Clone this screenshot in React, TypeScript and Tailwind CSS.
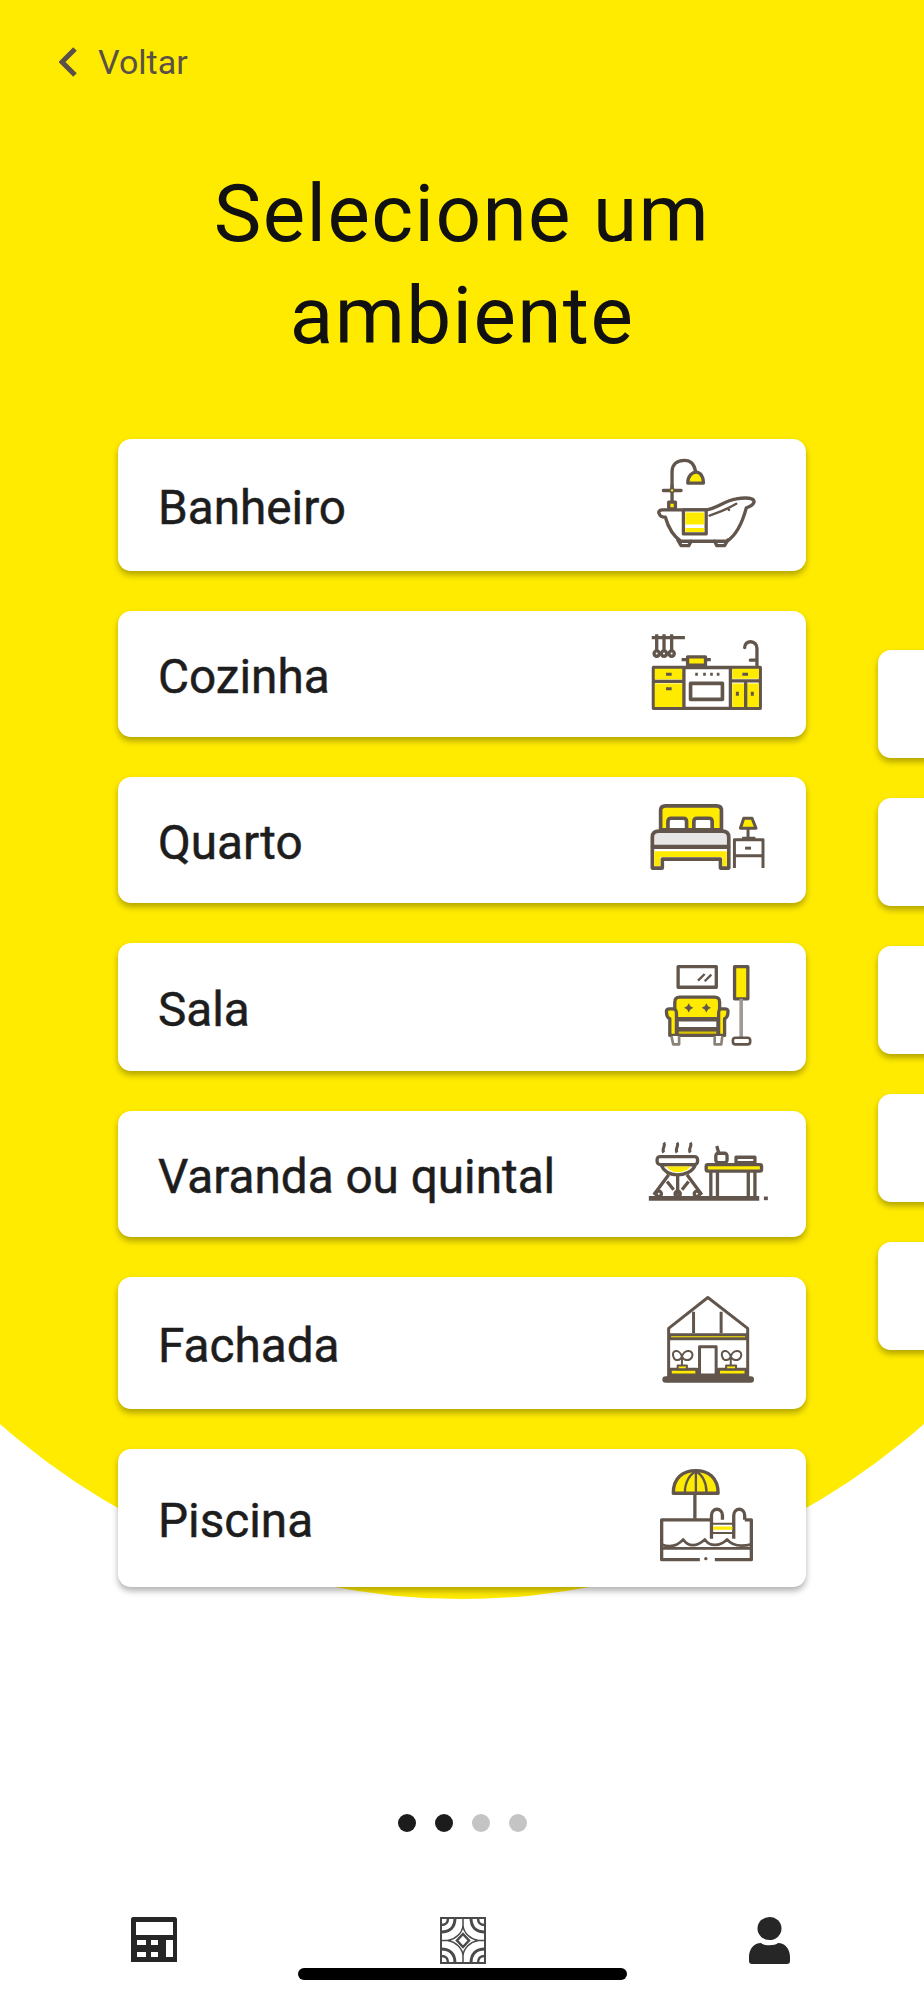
import React from "react";

const ink = "#62564c";
const yellow = "#ffeb00";

// icon outlines, soft like the scaled bitmaps in the app
const iconClass = "blur-[0.5px]";

const Bathtub = () => (
  <svg className={iconClass} width="102" height="92" viewBox="50 20 305 275" fill="none" stroke={ink} strokeWidth="10" strokeLinecap="round" strokeLinejoin="round">
    <path d="M98 115V65C98 40 115 30 135 30C155 30 165 45 168 62" />
    <path d="M145 98C145 75 160 65 170 65C182 65 192 78 192 98Z" fill={yellow} />
    <path d="M72 120H125M98 105V155" />
    <path d="M98 112L106 120L98 128L90 120Z" fill={yellow} strokeWidth="5" />
    <path d="M88 155H108V175H88Z" fill={yellow} />
    <path d="M60 190C55 182 62 178 70 178H200C230 175 255 150 290 145C320 140 345 142 343 155C340 165 330 168 320 172C310 210 295 250 262 272H125C100 255 85 225 78 200C70 200 62 197 60 190Z" fill="#fff" />
    <path d="M210 195C240 185 265 175 290 160" strokeWidth="7" />
    <path d="M132 178H200V250H132Z" fill="#fff" />
    <path d="M138 186H194V222H138ZM138 232H194V244H138Z" fill={yellow} stroke="none" />
    <path d="M115 268L125 285H148L155 272M225 272L232 285H255L265 268" />
    <circle cx="268" cy="178" r="4" fill={ink} stroke="none" />
  </svg>
);

const Kitchen = () => (
  <svg className={iconClass} width="113" height="79" viewBox="30 545 340 238" fill="none" stroke={ink} strokeWidth="10" strokeLinejoin="round">
    <path d="M35 562H135M50 552V602M72 552V602M95 552V602" />
    <circle cx="50" cy="610" r="8" />
    <circle cx="72" cy="610" r="8" />
    <circle cx="95" cy="610" r="8" />
    <path d="M143 620H197V645H143Z" fill={yellow} />
    <path d="M125 628H143M197 628H213" />
    <path d="M315 592C315 568 352 568 352 595V645M332 630H352" strokeLinecap="round" />
    <path d="M40 652H362V775H40Z" fill="#fff" />
    <path d="M44 656H130V688H44ZM44 700H130V771H44Z" fill={yellow} stroke="none" />
    <path d="M278 656H358V686H278ZM278 700H314V771H278ZM322 700H358V771H322Z" fill={yellow} stroke="none" />
    <path d="M40 694H132M275 692H362" />
    <path d="M132 652V775M272 652V775M318 696V775" />
    <path d="M152 700H248V748H152Z" fill="#fff" strokeWidth="11" />
    <path d="M166 672H174M190 672H198M211 672H219M231 672H239M78 672H95M78 716H95M308 672H325M293 725V737M338 725V737" strokeWidth="9" />
  </svg>
);

const Bed = () => (
  <svg className={iconClass} width="115" height="68" viewBox="28 100 346 203" fill="none" stroke={ink} strokeWidth="11" strokeLinejoin="round">
    <path d="M60 180V122Q60 108 75 108H228Q243 108 243 122V180Z" fill={yellow} />
    <path d="M82 180V155Q82 145 92 145H128Q138 145 138 155V180ZM160 180V155Q160 145 170 145H205Q215 145 215 155V180Z" fill="#fff" />
    <path d="M35 230V202Q35 184 55 184H245Q265 184 265 202V230Z" fill="#e6e6e6" />
    <path d="M35 232H265V295H240V268H65V295H35Z" fill="#fff" />
    <path d="M41 244H259V289H246V262H59V289H41Z" fill={yellow} stroke="none" />
    <path d="M282 295V210H368V295M282 258H368" strokeWidth="9" />
    <path d="M310 145H335L347 175H300Z" fill={yellow} strokeWidth="9" />
    <path d="M323 175V205M305 205H345" strokeWidth="9" />
    <path d="M314 235H332" strokeWidth="9" />
  </svg>
);

const Sofa = () => (
  <svg className={iconClass} width="90" height="83" viewBox="70 580 270 250" fill="none" stroke={ink} strokeWidth="10" strokeLinejoin="round">
    <path d="M115 588H230V650H115Z" />
    <path d="M175 630L195 610M195 632L215 612" strokeWidth="7" />
    <path d="M285 588H325V685H285Z" fill={yellow} />
    <path d="M305 685V800" stroke="#a09a94" strokeWidth="11" />
    <rect x="280" y="802" width="52" height="20" rx="8" fill="#fff" strokeWidth="8" />
    <path d="M105 745V695Q105 680 120 680H225Q240 680 240 695V745Z" fill={yellow} />
    <path d="M147 698L152 707L161 712L152 717L147 726L142 717L133 712L142 707ZM200 698L205 707L214 712L205 717L200 726L195 717L186 712L195 707Z" fill={ink} stroke="none" />
    <path d="M80 725Q78 715 90 715H100Q110 715 110 730V795H90V745Q80 740 80 725ZM265 725Q267 715 255 715H245Q237 715 237 730V795H255V745Q265 740 265 725Z" fill={yellow} />
    <path d="M112 748H235V775H112Z" fill="#fff" />
    <path d="M112 778H235V795H112Z" fill="#d9c300" />
    <path d="M95 797L100 822H118V797M225 797V822H245L248 797" fill="#fff" stroke="#8a8178" strokeWidth="8" />
  </svg>
);

const Grill = () => (
  <svg className={iconClass} width="123" height="62" viewBox="20 120 370 187" fill="none" stroke={ink} strokeWidth="10" strokeLinejoin="round">
    <path d="M70 128C78 138 62 145 70 158M110 128C118 138 102 145 110 158M150 128C158 138 142 145 150 158" strokeWidth="9" />
    <rect x="50" y="170" width="122" height="24" rx="9" fill="#fff" />
    <path d="M62 195H165C158 215 135 225 112 225C90 225 70 215 62 195Z" fill="#fff" />
    <path d="M78 200H150C145 210 130 217 112 217C96 217 84 210 78 200Z" fill={yellow} stroke="none" />
    <path d="M85 225L40 285M140 225L185 285M112 225V285M80 245L100 270M145 245L125 270" />
    <circle cx="55" cy="282" r="8" />
    <circle cx="112" cy="282" r="8" />
    <circle cx="170" cy="282" r="8" />
    <path d="M25 296H358" strokeWidth="14" />
    <path d="M372 296H384" strokeWidth="11" />
    <rect x="198" y="194" width="167" height="20" rx="5" fill={yellow} />
    <path d="M212 215V290M232 215V290M325 215V290M345 215V290" />
    <rect x="227" y="160" width="34" height="28" rx="8" fill="#fff" />
    <path d="M236 160L230 138M288 188V172H345V188Z" />
  </svg>
);

const House = () => (
  <svg className={iconClass} width="93" height="90" viewBox="65 585 280 270" fill="none" stroke={ink} strokeWidth="9" strokeLinejoin="round">
    <path d="M85 830V685L203 592L323 685V830Z" fill="#fff" />
    <path d="M160 635V700M243 635V700" />
    <path d="M88 704H320V716H88Z" fill={yellow} />
    <path d="M178 740H228V825H178Z" fill="#fff" />
    <path d="M90 808H170V825H90ZM235 808H318V825H235Z" fill={yellow} />
    <path d="M112 797H140V808H112ZM258 797H288V808H258Z" fill={yellow} strokeWidth="6" />
    <path d="M125 795V770C118 745 90 750 100 772C105 785 120 782 125 770C132 745 165 750 155 772C148 785 130 782 125 770M272 795V770C265 745 237 750 247 772C252 785 267 782 272 770C279 745 312 750 302 772C295 785 277 782 272 770" strokeWidth="6" />
    <path d="M76 839H332" strokeWidth="20" strokeLinecap="round" />
  </svg>
);

const Pool = () => (
  <svg className={iconClass} width="97" height="95" viewBox="55 82 290 286" fill="none" stroke={ink} strokeWidth="10" strokeLinejoin="round">
    <path d="M100 158C100 110 130 90 168 90C205 90 235 110 235 158Z" fill={yellow} />
    <path d="M135 155C135 125 150 100 168 92C186 100 200 125 200 155M168 92V155" strokeWidth="7" />
    <path d="M165 158V235" />
    <path d="M215 238H65V358H180M225 358H335V238H315" />
    <path d="M65 312C85 320 110 320 130 297C145 320 170 320 195 297C210 320 240 318 262 297C280 320 310 318 335 312M68 324H332" strokeWidth="8" />
    <path d="M215 295V225C215 200 248 200 248 225V238M282 295V225C282 200 315 200 315 225V238" fill="#fff" />
    <path d="M220 258H278V268H220Z" fill={yellow} stroke="none" />
    <path d="M218 250H280M218 278H280" strokeWidth="6" />
    <circle cx="198" cy="355" r="5" fill={ink} stroke="none" />
  </svg>
);

const rooms = [
  { name: "Banheiro", icon: Bathtub, card: "h-[132px] pr-[48px]", nudge: "mb-[4px]" },
  { name: "Cozinha", icon: Kitchen, card: "h-[126px] pr-[43px]", nudge: "mb-[5px]" },
  { name: "Quarto", icon: Bed, card: "h-[126px] pr-[41px]", nudge: "mb-[6px]" },
  { name: "Sala", icon: Sofa, card: "h-[128px] pr-[53px]", nudge: "mb-[4px]" },
  { name: "Varanda ou quintal", icon: Grill, card: "h-[126px] pr-[36px]", nudge: "mb-[6px]" },
  { name: "Fachada", icon: House, card: "h-[132px] pr-[51px]", nudge: "mb-[6px]" },
  { name: "Piscina", icon: Pool, card: "h-[138px] pr-[51px]", nudge: "mb-[6px]" },
];

const Calculator = () => (
  <svg width="46" height="45" viewBox="0 0 46 45" fill="#262626">
    <path fillRule="evenodd" d="M0 2C0 1 1 0 2 0H44C45 0 46 1 46 2V45H0ZM5 5V18H42V5ZM6 23V28H15V23ZM20 23V28H27V23ZM35 23V40H42V23ZM6 35V40H15V35ZM20 35V40H27V35Z" />
  </svg>
);

const Tile = () => (
  <svg className="blur-[0.4px]" width="46" height="47" viewBox="0 0 46 47" fill="none" stroke="#4a4a4a">
    <rect x="1" y="1" width="44" height="45" fill="#fff" strokeWidth="2" />
    <path d="M23 1V46M1 23.5H45" strokeWidth="1.5" />
    <path d="M1 15C10 15 15 10 15 1M31 1C31 10 36 15 45 15M1 32C10 32 15 37 15 46M31 46C31 37 36 32 45 32" strokeWidth="3" />
    <path d="M1 8C6 8 8 6 8 1M38 1C38 6 40 8 45 8M1 39C6 39 8 41 8 46M38 46C38 41 40 39 45 39" strokeWidth="2.5" />
    <path d="M23 9C24 16 30 22 38 23.5C30 25 24 31 23 38C22 31 16 25 8 23.5C16 22 22 16 23 9Z" fill="#fff" strokeWidth="1.5" />
    <path d="M23 17L29 23.5L23 30L17 23.5Z" strokeWidth="2.5" />
  </svg>
);

const Person = () => (
  <svg width="41" height="47" viewBox="0 0 41 47" fill="#262626">
    <ellipse cx="20.5" cy="11.5" rx="12" ry="11.5" />
    <path d="M3 47Q0 47 0 44V40C0 32 5 26 12 26C15 29 26 29 29 26C36 26 41 32 41 40V44Q41 47 38 47Z" />
  </svg>
);

const RoomCard = ({ room }: { room: (typeof rooms)[number] }) => {
  const Icon = room.icon;
  return (
    <div className={`flex items-center justify-between rounded-[13px] bg-white pl-[40px] shadow-[0_4px_6px_rgba(0,0,0,0.3)] ${room.card}`}>
      <span className="mt-[8px] text-[47.7px] leading-none text-[#1d1d1d] [-webkit-text-stroke:0.5px_#1d1d1d]">{room.name}</span>
      <div className={room.nudge}>
        <Icon />
      </div>
    </div>
  );
};

export default function App() {
  return (
    <div className="relative h-[2000px] w-[924px] overflow-hidden bg-white font-['Roboto',sans-serif]">
      {/* yellow backdrop circle */}
      <div className="absolute bottom-[401px] left-[-235px] h-[1394px] w-[1394px] rounded-full bg-[#ffeb00]" />
      <div className="absolute top-0 left-0 h-[400px] w-[924px] bg-[#ffeb00]" />

      <div className="relative flex h-full flex-col">
        <div className="flex items-center gap-[21px] pt-[42px] pl-[59px] text-[#5b5048]">
          <svg width="18" height="30" viewBox="0 0 18 30" fill="none" stroke="#5b5048" strokeWidth="5">
            <path d="M16 2L3 15L16 28" />
          </svg>
          <span className="text-[34px] leading-[40px]">Voltar</span>
        </div>

        <h1 className="mt-[81px] text-center text-[80px] leading-[102px] tracking-[1.4px] text-[#111]">
          Selecione um
          <br />
          ambiente
        </h1>

        <div className="mt-[72px] flex">
          <div className="ml-[118px] flex w-[688px] shrink-0 flex-col gap-[40px]">
            {rooms.map((room) => (
              <RoomCard key={room.name} room={room} />
            ))}
          </div>
          <div className="mt-[211px] ml-[72px] flex w-[200px] shrink-0 flex-col gap-[40px]">
            {[0, 1, 2, 3, 4].map((i) => (
              <div key={i} className="h-[108px] rounded-[13px] bg-white shadow-[0_4px_6px_rgba(0,0,0,0.3)]" />
            ))}
          </div>
        </div>

        <div className="mt-[227px] flex justify-center gap-[19px]">
          <span className="h-[18px] w-[18px] rounded-full bg-[#1c1c1c]" />
          <span className="h-[18px] w-[18px] rounded-full bg-[#1c1c1c]" />
          <span className="h-[18px] w-[18px] rounded-full bg-[#c4c4c4]" />
          <span className="h-[18px] w-[18px] rounded-full bg-[#c4c4c4]" />
        </div>

        <div className="mt-[85px] flex items-start justify-between pr-[134px] pl-[131px]">
          <Calculator />
          <Tile />
          <Person />
        </div>
      </div>

      {/* home indicator */}
      <div className="absolute top-[1968px] left-[298px] h-[12px] w-[329px] rounded-full bg-black" />
    </div>
  );
}
